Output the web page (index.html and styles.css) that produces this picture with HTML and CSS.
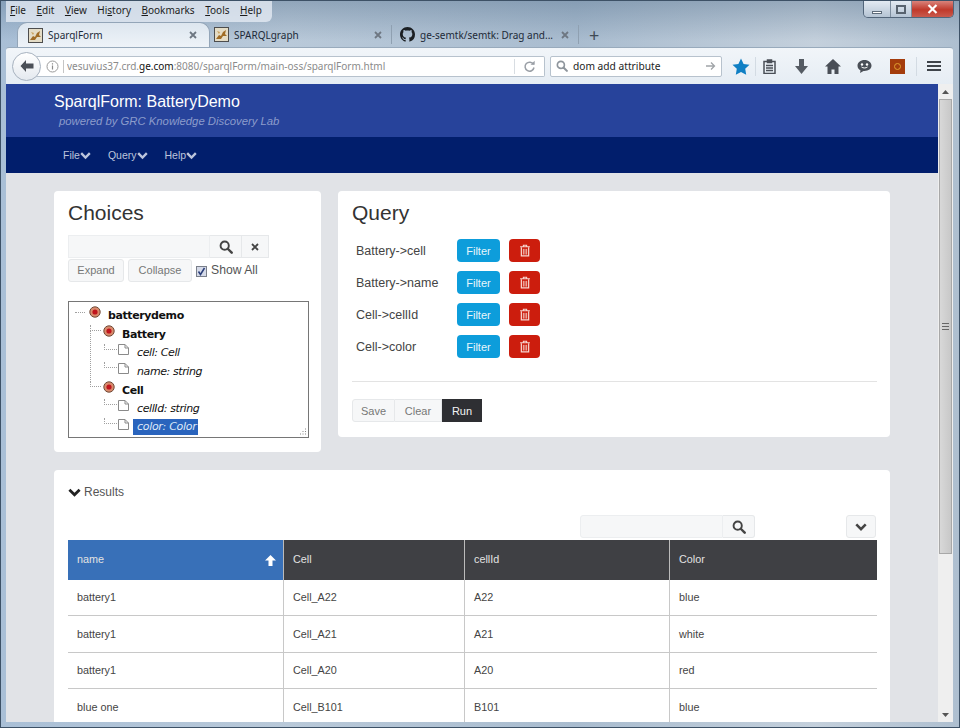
FILE: index.html
```html
<!DOCTYPE html>
<html lang="en">

<head>
  <meta charset="UTF-8">
  <title>SparqlForm</title>
  <link rel="stylesheet" href="styles.css">
</head>

<body>
  <svg class="defs" width="0" height="0">
    <symbol id="fav" viewBox="0 0 15 15">
      <rect x="0.5" y="0.5" width="14" height="14" fill="#e4dcc6" stroke="#4d4d4d"/>
      <path d="M2 12l3-4 2 1 2-4 3-2-1 4 2 2-4 0-2 3z" fill="#a06c26"/>
      <path d="M3 4l3 1-1 2z" fill="#c9a05c"/>
    </symbol>
    <symbol id="search" viewBox="0 0 16 16">
      <circle cx="6.5" cy="6.5" r="4.7" fill="none" stroke="currentColor" stroke-width="2.2"/>
      <path d="M10 10l4.5 4.5" stroke="currentColor" stroke-width="2.8" stroke-linecap="round"/>
    </symbol>
    <symbol id="chev" viewBox="1 1 14 14">
      <path d="M2.5 5l5.5 5.5L13.500 5" fill="none" stroke="currentColor" stroke-width="3"/>
    </symbol>
    <symbol id="trash" viewBox="0 0 14 16">
      <path d="M1 3.500h12M5 3V1.500h4V3" fill="none" stroke="currentColor" stroke-width="1.300"/>
      <path d="M2.500 4v10.500h9V4" fill="none" stroke="currentColor" stroke-width="1.500"/>
      <path d="M5 6v7M7 6v7M9 6v7" stroke="currentColor" stroke-width="1"/>
    </symbol>
    <symbol id="node" viewBox="0 0 12 12">
      <circle cx="6" cy="6" r="5.200" fill="#d98a6c" stroke="#6f4a38"/>
      <circle cx="6" cy="6" r="2.600" fill="#c0141c"/>
    </symbol>
    <symbol id="file" viewBox="0 0 11 11">
      <path d="M0.500 0.500h6.500l3.500 3.500v6.500h-10zM7 0.500v3.500h3.500" fill="#fff" stroke="#8a8a8a"/>
    </symbol>
    <symbol id="tabx" viewBox="0 0 8 8">
      <path d="M1 1l6 6M7 1l-6 6" stroke="currentColor" stroke-width="1.800"/>
    </symbol>
  </svg>

  <div class="window">
    <div class="win-controls">
      <div class="win-btn win-min"><span></span></div>
      <div class="win-btn win-max"><span></span></div>
      <div class="win-btn win-close">
        <svg width="11" height="10" viewBox="0 0 11 10"><path d="M1.500 1l8 8M9.500 1l-8 8" stroke="#fff" stroke-width="2.200"/></svg>
      </div>
    </div>

    <div class="menubar">
      <span><u>F</u>ile</span>
      <span><u>E</u>dit</span>
      <span><u>V</u>iew</span>
      <span>Hi<u>s</u>tory</span>
      <span><u>B</u>ookmarks</span>
      <span><u>T</u>ools</span>
      <span><u>H</u>elp</span>
    </div>

    <div class="tabs">
      <div class="tab tab-active">
        <svg class="tab-icon"><use href="#fav"/></svg>
        <span class="tab-label">SparqlForm</span>
        <svg class="tab-x"><use href="#tabx"/></svg>
      </div>
      <div class="tab tab-two">
        <svg class="tab-icon"><use href="#fav"/></svg>
        <span class="tab-label">SPARQLgraph</span>
        <svg class="tab-x"><use href="#tabx"/></svg>
      </div>
      <div class="tab tab-three">
        <svg class="tab-icon" viewBox="0 0 16 16"><path fill="#1b1f23" d="M8 0C3.580 0 0 3.580 0 8c0 3.540 2.290 6.530 5.470 7.590.4.070.55-.17.55-.38 0-.19-.01-.82-.01-1.490-2.010.37-2.530-.49-2.690-.94-.09-.23-.48-.94-.82-1.130-.28-.15-.68-.52-.01-.53.63-.01 1.080.58 1.230.82.72 1.210 1.870.87 2.330.66.07-.52.28-.87.51-1.070-1.780-.2-3.640-.89-3.640-3.950 0-.87.31-1.590.82-2.150-.08-.2-.36-1.020.08-2.120 0 0 .67-.21 2.200.82.64-.18 1.320-.27 2-.27.68 0 1.360.09 2 .27 1.530-1.040 2.200-.82 2.200-.82.44 1.100.16 1.920.08 2.120.51.56.82 1.270.82 2.150 0 3.070-1.870 3.750-3.650 3.950.29.25.54.73.54 1.480 0 1.070-.01 1.930-.01 2.200 0 .21.15.46.55.38A8.013 8.013 0 0016 8c0-4.420-3.580-8-8-8z"/></svg>
        <span class="tab-label">ge-semtk/semtk: Drag and...</span>
        <svg class="tab-x"><use href="#tabx"/></svg>
      </div>
      <div class="tab-new">+</div>
    </div>

    <div class="toolbar">
      <div class="back">
        <svg width="16" height="14" viewBox="0 0 16 14"><path d="M7 1L1.500 7 7 13V9.500h7.500v-5H7z" fill="#4a4f57"/></svg>
      </div>
      <div class="urlbar">
        <svg class="info" width="13" height="13" viewBox="0 0 13 13"><circle cx="6.500" cy="6.500" r="5.500" fill="none" stroke="#9a9a9a"/><path d="M6.500 5.500v4M6.500 3.200v1.200" stroke="#8a8a8a" stroke-width="1.200"/></svg>
        <span class="url">vesuvius37.crd.<b>ge.com</b>:8080/sparqlForm/main-oss/sparqlForm.html</span>
        <span class="reload">
          <svg width="13" height="13" viewBox="0 0 13 13"><path d="M10.500 4.500A4.500 4.500 0 1 0 11 7.500" fill="none" stroke="#9a9fa6" stroke-width="1.500"/><path d="M7.500 4.800h4.200V.8z" fill="#9a9fa6"/></svg>
        </span>
      </div>
      <div class="searchbar">
        <svg class="searchbar-icon"><use href="#search"/></svg>
        <span class="searchbar-text">dom add attribute</span>
        <svg width="11" height="10" viewBox="0 0 11 10"><path d="M1 5h8M6 1.500L9.500 5 6 8.500" fill="none" stroke="#a0a4a8" stroke-width="1.300"/></svg>
      </div>
      <div class="tools">
        <svg class="tool tool-star" width="18" height="17" viewBox="0 0 18 17"><path d="M9 0.500l2.600 5.400 5.900.8-4.300 4.100 1 5.900L9 13.900l-5.200 2.800 1-5.900L.5 6.700l5.900-.8z" fill="#0f7fc4"/></svg>
        <span class="tool-sep tool-sep-a"></span>
        <svg class="tool tool-clip" width="13" height="15" viewBox="0 0 13 15"><path d="M1 2.500h11v12H1zM4.500 1h4v2.500h-4z" fill="none" stroke="#4a4f57" stroke-width="1.500"/><path d="M3 6.500h7M3 9h7M3 11.500h7" stroke="#4a4f57" stroke-width="1.500"/></svg>
        <svg class="tool tool-down" width="13" height="15" viewBox="0 0 13 15"><path d="M4 0h5v7h4l-6.500 8L0 7h4z" fill="#555b63"/></svg>
        <svg class="tool tool-home" width="16" height="15" viewBox="0 0 16 15"><path d="M8 0L0 7.500h2.500V15h4v-4.500h3V15h4V7.500H16z" fill="#4a4f57"/></svg>
        <svg class="tool tool-chat" width="15" height="15" viewBox="0 0 15 15"><path d="M7.500 1C3.500 1 .5 3.500.5 6.700c0 2 1.200 3.700 3 4.700L3 14l3.500-2.100h1C11.500 11.900 14.500 9.800 14.500 6.700S11.500 1 7.500 1z" fill="#4a4f57"/><circle cx="5" cy="5.500" r="1.200" fill="#fff"/><circle cx="10" cy="5.500" r="1.200" fill="#fff"/><path d="M4.500 8c1.500 1.300 4.500 1.300 6 0" fill="none" stroke="#fff"/></svg>
        <svg class="tool tool-addon" width="15" height="15" viewBox="0 0 15 15"><rect width="15" height="15" fill="#a43c0c"/><circle cx="7.500" cy="7.500" r="3" fill="none" stroke="#e0a030"/></svg>
        <span class="tool-sep tool-sep-b"></span>
        <div class="tool-menu"><span></span><span></span><span></span></div>
      </div>
    </div>

    <div class="viewport">
      <div class="page">
        <div class="banner">
          <div class="banner-title">SparqlForm: BatteryDemo</div>
          <div class="banner-sub">powered by GRC Knowledge Discovery Lab</div>
        </div>
        <div class="navbar">
          <span class="nav-item">File<svg class="nav-chev"><use href="#chev"/></svg></span>
          <span class="nav-item">Query<svg class="nav-chev"><use href="#chev"/></svg></span>
          <span class="nav-item">Help<svg class="nav-chev"><use href="#chev"/></svg></span>
        </div>

        <div class="columns">
          <div class="card card-choices">
            <h3 class="card-title">Choices</h3>
            <div class="tree-search">
              <input class="tree-input" type="text">
              <button class="addon addon-search"><svg class="icon-14"><use href="#search"/></svg></button>
              <button class="addon addon-clear"><svg width="8" height="8"><use href="#tabx"/></svg></button>
            </div>
            <div class="tree-actions">
              <button class="btn">Expand</button>
              <button class="btn">Collapse</button>
              <label class="show-all"><span class="check">
                <svg width="9" height="9" viewBox="0 0 9 9"><path d="M1.500 4.500l2 3L7.500 1" fill="none" stroke="#2c3f7a" stroke-width="1.500"/></svg>
              </span>Show All</label>
            </div>
            <div class="tree">
              <div class="tree-row lvl-0 has-kids"><svg class="tree-node"><use href="#node"/></svg><b>batterydemo</b></div>
              <div class="tree-row lvl-1 span-battery"><svg class="tree-node"><use href="#node"/></svg><b>Battery</b></div>
              <div class="tree-row lvl-2"><svg class="tree-file"><use href="#file"/></svg><i>cell: Cell</i></div>
              <div class="tree-row lvl-2"><svg class="tree-file"><use href="#file"/></svg><i>name: string</i></div>
              <div class="tree-row lvl-1"><svg class="tree-node"><use href="#node"/></svg><b>Cell</b></div>
              <div class="tree-row lvl-2"><svg class="tree-file"><use href="#file"/></svg><i>cellId: string</i></div>
              <div class="tree-row lvl-2"><svg class="tree-file"><use href="#file"/></svg><i class="selected">color: Color</i></div>
              <svg class="grip" width="8" height="8" viewBox="0 0 8 8"><path d="M6 1h1M3.500 3.500h1M6 3.500h1M1 6h1M3.500 6h1M6 6h1" stroke="#888"/></svg>
            </div>
          </div>

          <div class="card card-query">
            <h3 class="card-title">Query</h3>
            <div class="query-list">
              <div class="query-row">
                <span class="query-name">Battery-&gt;cell</span>
                <button class="btn-filter">Filter</button>
                <button class="btn-trash"><svg class="icon-trash"><use href="#trash"/></svg></button>
              </div>
              <div class="query-row">
                <span class="query-name">Battery-&gt;name</span>
                <button class="btn-filter">Filter</button>
                <button class="btn-trash"><svg class="icon-trash"><use href="#trash"/></svg></button>
              </div>
              <div class="query-row">
                <span class="query-name">Cell-&gt;cellId</span>
                <button class="btn-filter">Filter</button>
                <button class="btn-trash"><svg class="icon-trash"><use href="#trash"/></svg></button>
              </div>
              <div class="query-row">
                <span class="query-name">Cell-&gt;color</span>
                <button class="btn-filter">Filter</button>
                <button class="btn-trash"><svg class="icon-trash"><use href="#trash"/></svg></button>
              </div>
            </div>
            <hr class="rule">
            <div class="btn-group">
              <button class="btn-g btn-save">Save</button>
              <button class="btn-g btn-clear">Clear</button>
              <button class="btn-g btn-run">Run</button>
            </div>
          </div>
        </div>

        <div class="card card-results">
          <div class="results-head"><svg class="results-chev"><use href="#chev"/></svg>Results</div>
          <div class="results-tools">
            <input class="results-input" type="text">
            <button class="addon addon-results"><svg class="icon-14"><use href="#search"/></svg></button>
            <button class="btn-more"><svg class="icon-12"><use href="#chev"/></svg></button>
          </div>
          <table class="results">
            <colgroup>
              <col class="col-1"><col class="col-2"><col class="col-3"><col class="col-4">
            </colgroup>
            <thead>
              <tr>
                <th class="sorted">name
                  <svg class="sort-up" width="11" height="11" viewBox="0 0 11 11"><path d="M5.500 0L11 5.500H7.500V11h-4V5.500H0z" fill="#fff"/></svg>
                </th>
                <th>Cell</th>
                <th>cellId</th>
                <th>Color</th>
              </tr>
            </thead>
            <tbody>
              <tr><td>battery1</td><td>Cell_A22</td><td>A22</td><td>blue</td></tr>
              <tr><td>battery1</td><td>Cell_A21</td><td>A21</td><td>white</td></tr>
              <tr><td>battery1</td><td>Cell_A20</td><td>A20</td><td>red</td></tr>
              <tr><td>blue one</td><td>Cell_B101</td><td>B101</td><td>blue</td></tr>
            </tbody>
          </table>
        </div>
      </div>

      <div class="scrollbar">
        <div class="scroll-arrow"><svg width="7" height="4" viewBox="0 0 7 4"><path d="M3.500 0L7 4H0z" fill="#555"/></svg></div>
        <div class="scroll-track">
          <div class="scroll-thumb"><span class="scroll-grip"></span></div>
        </div>
        <div class="scroll-arrow"><svg width="7" height="4" viewBox="0 0 7 4"><path d="M0 0h7L3.500 4z" fill="#555"/></svg></div>
      </div>
    </div>
  </div>
</body>

</html>
```

FILE: styles.css
```css
html,
body {
  margin: 0;
  padding: 0;
  height: 728px;
  overflow: hidden;
}

.defs {
  position: absolute;
}

.window {
  position: relative;
  width: 960px;
  height: 728px;
  box-sizing: border-box;
  padding: 0 6px 5px 5px;
  display: flex;
  flex-direction: column;
  overflow: hidden;
  background: linear-gradient(rgba(70, 100, 130, 0.35), rgba(70, 100, 130, 0) 40px), linear-gradient(90deg, #a9bfd6 0%, #b9c9d9 30%, #a9bccf 60%, #c4d0dc 85%, #aebfd0 100%);
  border: 1px solid #3d5166;
  font-family: "Noto Sans", "Liberation Sans", sans-serif;
}

/* window buttons */
.win-controls {
  position: absolute;
  top: 0;
  right: 5px;
  display: flex;
  height: 16px;
  border: 1px solid #52657a;
  border-top: 0;
  border-radius: 0 0 5px 5px;
  overflow: hidden;
}

.win-btn {
  display: flex;
  align-items: center;
  justify-content: center;
  box-sizing: border-box;
  border-right: 1px solid #7d8d9e;
  background: linear-gradient(#e3eaf2, #b5c4d4);
}

.win-min {
  width: 27px;
}

.win-min span {
  width: 10px;
  height: 3px;
  margin-top: 6px;
  background: #fff;
  border: 1px solid #5d6b7a;
  box-sizing: border-box;
}

.win-max {
  width: 21px;
}

.win-max span {
  width: 10px;
  height: 9px;
  border: 2px solid #58636f;
  box-sizing: border-box;
}

.win-close {
  width: 41px;
  border-right: 0;
  background: linear-gradient(#d9837b, #c0392b 55%, #c95a4d);
}

/* menu and tabs */
.menubar {
  align-self: flex-start;
  display: flex;
  height: 21px;
  width: 266px;
  box-sizing: border-box;
  gap: 10.5px;
  padding: 2px 0 0 4px;
  font-size: 10px;
  line-height: 15px;
  color: #1c1c1c;
  background: rgba(232, 238, 245, 0.75);
  border-radius: 0 0 6px 0;
}

.menubar u {
  text-underline-offset: 1px;
}

.tabs {
  display: flex;
  align-items: center;
  height: 25px;
  font-size: 10px;
  color: #1d2a38;
}

.tab {
  display: flex;
  align-items: center;
  box-sizing: border-box;
  height: 25px;
}

.tab-active {
  width: 193px;
  margin-left: 11px;
  padding: 0 12px 0 10px;
  background: linear-gradient(#dde6ef, #eef3f8);
  border: 1px solid #93a5b8;
  border-bottom: 0;
  border-radius: 10px 10px 0 0;
}

.tab-two {
  width: 182px;
  padding: 0 9px 0 4px;
  border-right: 1px solid #8fa0b1;
  height: 19px;
}

.tab-three {
  width: 187px;
  padding: 0 9px 0 8px;
  border-right: 1px solid #8fa0b1;
  height: 19px;
}

.tab-icon {
  width: 15px;
  height: 15px;
  margin-right: 5px;
  flex: none;
}

.tab-label {
  flex: 1;
  white-space: nowrap;
  overflow: hidden;
}

.tab-x {
  width: 8px;
  height: 8px;
  color: #6e7782;
  flex: none;
}

.tab-new {
  margin-left: 10px;
  font-size: 18px;
  line-height: 20px;
  color: #3f4a55;
}

/* toolbar */
.toolbar {
  display: flex;
  align-items: center;
  height: 37px;
  box-sizing: border-box;
  padding: 0 0 0 6px;
  background: linear-gradient(#f1f5f9, #e6edf4);
  border-top: 1px solid #98aabc;
  border-radius: 3px 3px 0 0;
}

.back {
  display: flex;
  align-items: center;
  justify-content: center;
  width: 27px;
  height: 27px;
  flex: none;
  border: 1px solid #a7b2bf;
  border-radius: 50%;
  background: linear-gradient(#fff, #e4e9ef);
  z-index: 1;
}

.urlbar {
  display: flex;
  align-items: center;
  width: 509px;
  height: 21px;
  margin-left: -5px;
  box-sizing: border-box;
  padding-left: 10px;
  background: #fff;
  border: 1px solid #b7c2cd;
  border-left: 0;
  border-radius: 0 2px 2px 0;
}

.info {
  flex: none;
  margin-right: 3px;
  padding-right: 4px;
  border-right: 1px solid #c5c5c5;
}

.url {
  flex: 1;
  font-size: 10px;
  color: #8b8b8b;
  white-space: nowrap;
  overflow: hidden;
}

.url b {
  font-weight: 400;
  color: #111;
}

.reload {
  display: flex;
  align-items: center;
  justify-content: center;
  width: 29px;
  height: 15px;
  border-left: 1px solid #d8dde2;
}

.searchbar {
  display: flex;
  align-items: center;
  width: 172px;
  height: 21px;
  margin-left: 5px;
  box-sizing: border-box;
  padding: 0 5px 0 5px;
  background: #fff;
  border: 1px solid #b7c2cd;
  border-radius: 2px;
}

.searchbar-icon {
  width: 12px;
  height: 12px;
  color: #8e959c;
  margin-right: 5px;
}

.searchbar-text {
  flex: 1;
  font-size: 10.2px;
  color: #222;
}

.tools {
  display: flex;
  align-items: center;
  flex: 1;
  height: 100%;
}

/* toolbar icons keep their own spots along the strip */
.tool {
  flex: none;
}

.tool-star {
  margin-left: 10px;
}

.tool-sep {
  width: 1px;
  height: 19px;
  background: #d3dbe3;
  flex: none;
}

.tool-sep-a {
  margin-left: 5px;
}

.tool-sep-b {
  margin-left: 11px;
}

.tool-clip {
  margin-left: 7px;
}

.tool-down {
  margin-left: 19px;
}

.tool-home {
  margin-left: 17px;
}

.tool-chat {
  margin-left: 16px;
}

.tool-addon {
  margin-left: 18px;
}

.tool-menu {
  display: flex;
  flex-direction: column;
  gap: 2px;
  margin-left: 10px;
}

.tool-menu span {
  display: block;
  width: 14px;
  height: 2px;
  background: #3f444a;
}

/* page */
.viewport {
  flex: 1;
  display: flex;
  min-height: 0;
}

.page {
  flex: 1;
  min-width: 0;
  overflow: hidden;
  background: #e1e3e7;
  font-family: "Liberation Sans", Arial, sans-serif;
  color: #333;
}

.banner {
  height: 53px;
  box-sizing: border-box;
  padding: 8px 0 0 48px;
  background: #27439b;
}

.banner-title {
  font-size: 16px;
  line-height: 20px;
  color: #fff;
}

.banner-sub {
  margin: 2px 0 0 5px;
  font-size: 11.3px;
  line-height: 15px;
  font-style: italic;
  color: #8c9ccb;
}

.navbar {
  display: flex;
  align-items: center;
  height: 36px;
  gap: 17px;
  padding-left: 57px;
  background: #011e6c;
  font-size: 10.5px;
  color: #bcc5dc;
}

.nav-item {
  display: flex;
  align-items: center;
}

.nav-chev {
  width: 11px;
  height: 11px;
}

.columns {
  display: grid;
  grid-template-columns: 267px 552px;
  gap: 17px;
  align-items: start;
  padding: 18px 0 0 48px;
}

.card {
  box-sizing: border-box;
  background: #fff;
  border-radius: 4px;
}

.card-title {
  margin: 0;
  font-size: 21px;
  font-weight: 400;
  line-height: 24px;
}

.card-choices {
  height: 261px;
  padding: 10px 12px 0 14px;
}

.card-query {
  height: 246px;
  padding: 10px 13px 0 14px;
}

/* choices */
.tree-search {
  display: flex;
  margin-top: 10px;
  height: 23px;
}

.tree-input {
  width: 142px;
  height: 23px;
  box-sizing: border-box;
  margin: 0;
  padding: 0;
  border: 1px solid #eceef0;
  background: #f6f7f8;
}

.addon {
  display: flex;
  align-items: center;
  justify-content: center;
  height: 23px;
  padding: 0;
  margin: 0;
  color: #444;
  background: #f6f7f8;
  border: 1px solid #e6e8ea;
  border-left: 0;
}

.addon-search {
  width: 32px;
}

.addon-clear {
  width: 27px;
}

.icon-14 {
  width: 14px;
  height: 14px;
}

.icon-12 {
  width: 12px;
  height: 12px;
}

.tree-actions {
  display: flex;
  align-items: center;
  margin-top: 1px;
}

.btn {
  height: 23px;
  margin-right: 4px;
  padding: 0 8px 1px 8px;
  box-sizing: border-box;
  font: 11px "Liberation Sans", Arial, sans-serif;
  color: #777;
  background: #f6f7f8;
  border: 1px solid #e6e8ea;
  border-radius: 3px;
}

.btn:first-child {
  width: 56px;
}

.btn:nth-child(2) {
  width: 64px;
}

.show-all {
  display: flex;
  align-items: center;
  margin-bottom: 2px;
  font-size: 12.2px;
  color: #555;
}

.check {
  display: flex;
  align-items: center;
  justify-content: center;
  width: 11px;
  height: 11px;
  box-sizing: border-box;
  margin: 3px 4px 0 0;
  background: #d5dae8;
  border: 1px solid #7a7f8a;
}

.tree {
  position: relative;
  width: 241px;
  height: 137px;
  box-sizing: border-box;
  margin-top: 19px;
  padding: 4.5px 0 0 0;
  background: #fff;
  border: 1px solid #767676;
  font-family: "DejaVu Sans", Tahoma, sans-serif;
  font-size: 11px;
  color: #111;
}

.tree-row {
  position: relative;
  display: flex;
  align-items: center;
  height: 18.600px;
  white-space: nowrap;
}

.lvl-0 {
  padding-left: 20px;
}

.lvl-1 {
  padding-left: 34px;
}

.lvl-2 {
  padding-left: 49px;
}

.tree-row b {
  letter-spacing: -0.4px;
  margin-left: 7px;
}

.tree-row i {
  margin-left: 5px;
  padding: 1px 3px;
  letter-spacing: -0.4px;
}

.tree-row .selected {
  margin-left: 4px;
  padding: 1px 2px 2px 4px;
  letter-spacing: -0.3px;
  background: #2a64bd;
  color: #dfe9f8;
}

.tree-node {
  width: 12px;
  height: 12px;
  flex: none;
  margin-top: -7px;
}

.tree-file {
  width: 11px;
  height: 11px;
  flex: none;
  margin-top: -6px;
}

/* dotted tree lines lie over the rows */
.tree-row::before {
  content: "";
  position: absolute;
  top: 0;
  height: 5px;
  border-bottom: 1px dotted #a0a0a0;
}

.lvl-0::before {
  left: 6px;
  width: 10px;
}

.lvl-1::before {
  left: 21px;
  width: 10px;
  border-left: 1px dotted #a0a0a0;
}

.lvl-2::before {
  left: 35px;
  width: 12px;
  border-left: 1px dotted #a0a0a0;
}

.span-battery::after {
  content: "";
  position: absolute;
  left: 21px;
  top: 5px;
  height: 52px;
  border-left: 1px dotted #a0a0a0;
}

.grip {
  position: absolute;
  right: 1px;
  bottom: 1px;
}

/* query */
.query-list {
  margin-top: 14px;
}

.query-row {
  display: flex;
  align-items: center;
  height: 23px;
  margin-top: 9px;
  padding-left: 4px;
}

.query-row:first-child {
  margin-top: 0;
}

.query-name {
  width: 101px;
  font-size: 12.5px;
  color: #444;
}

.btn-filter {
  width: 43px;
  height: 23px;
  padding: 0;
  font: 11px "Liberation Sans", Arial, sans-serif;
  color: #e8f6fc;
  background: #0d9ddb;
  border: 0;
  border-radius: 4px;
}

.btn-trash {
  display: flex;
  align-items: center;
  justify-content: center;
  width: 31px;
  height: 23px;
  margin-left: 9px;
  padding: 0;
  color: #f6d8d2;
  background: #cc1d0d;
  border: 0;
  border-radius: 4px;
}

.icon-trash {
  width: 12px;
  height: 13px;
}

.rule {
  margin: 23px 0 0 0;
  height: 0;
  border: 0;
  border-top: 1px solid #e3e3e3;
}

.btn-group {
  display: flex;
  margin-top: 17px;
}

.btn-g {
  height: 23px;
  padding: 0;
  font: 11px "Liberation Sans", Arial, sans-serif;
  color: #777;
  background: #f6f7f8;
  border: 1px solid #e6e8ea;
}

.btn-save {
  width: 43px;
  border-radius: 3px 0 0 3px;
}

.btn-clear {
  width: 47px;
  border-left: 0;
}

.btn-run {
  width: 40px;
  color: #f4f4f4;
  background: #2e2f33;
  border-color: #2e2f33;
}

/* results */
.card-results {
  width: 836px;
  height: 400px;
  margin: 18px 0 0 48px;
  padding: 14px 13px 0 14px;
}

.results-head {
  display: flex;
  align-items: center;
  height: 16px;
  font-size: 12px;
  color: #555;
}

.results-chev {
  width: 13px;
  height: 13px;
  margin-right: 3px;
  color: #222;
}

.results-tools {
  display: flex;
  height: 23px;
  margin-top: 15px;
  padding-left: 512px;
}

.results-input {
  width: 143px;
  height: 23px;
  box-sizing: border-box;
  margin: 0;
  padding: 0;
  background: #f6f7f8;
  border: 1px solid #eceef0;
  border-radius: 3px 0 0 3px;
}

.addon-results {
  width: 32px;
  border-radius: 0 3px 3px 0;
}

.btn-more {
  display: flex;
  align-items: center;
  justify-content: center;
  width: 30px;
  height: 23px;
  margin-left: 91px;
  padding: 0;
  color: #444;
  background: #f6f7f8;
  border: 1px solid #e6e8ea;
  border-radius: 3px;
}

.results {
  width: 809px;
  margin-top: 2px;
  table-layout: fixed;
  border-collapse: separate;
  border-spacing: 0;
  font-size: 10.8px;
  color: #444;
}

.col-1 {
  width: 215px;
}

.col-2 {
  width: 181px;
}

.col-3 {
  width: 205px;
}

.col-4 {
  width: 208px;
}

.results th {
  position: relative;
  height: 39.5px;
  padding: 0 0 1px 9px;
  box-sizing: border-box;
  font-weight: 400;
  text-align: left;
  color: #e2e2e2;
  background: #3f4044;
  border-left: 1px solid #bbb;
}

.results th:first-child,
.results td:first-child {
  border-left: 0;
}

.results .sorted {
  background: #3870b8;
}

.sort-up {
  position: absolute;
  right: 7px;
  top: 15px;
}

.results td {
  height: 36.500px;
  padding: 0 0 0 9px;
  box-sizing: border-box;
  border-left: 1px solid #c8c8c8;
  border-bottom: 1px solid #c8c8c8;
}

/* scrollbar */
.scrollbar {
  display: flex;
  flex-direction: column;
  width: 15px;
  flex: none;
  background: #efefef;
}

.scroll-arrow {
  display: flex;
  align-items: center;
  justify-content: center;
  height: 15px;
  flex: none;
}

.scroll-track {
  flex: 1;
}

.scroll-thumb {
  display: flex;
  align-items: center;
  justify-content: center;
  height: 455px;
  margin: 0 1px;
  background: linear-gradient(90deg, #d8d8d8, #c8c8c8);
  border: 1px solid #a8a8a8;
  box-sizing: border-box;
}

.scroll-grip {
  width: 7px;
  height: 7px;
  background: repeating-linear-gradient(#666 0, #666 1px, transparent 1px, transparent 3px);
}
```
